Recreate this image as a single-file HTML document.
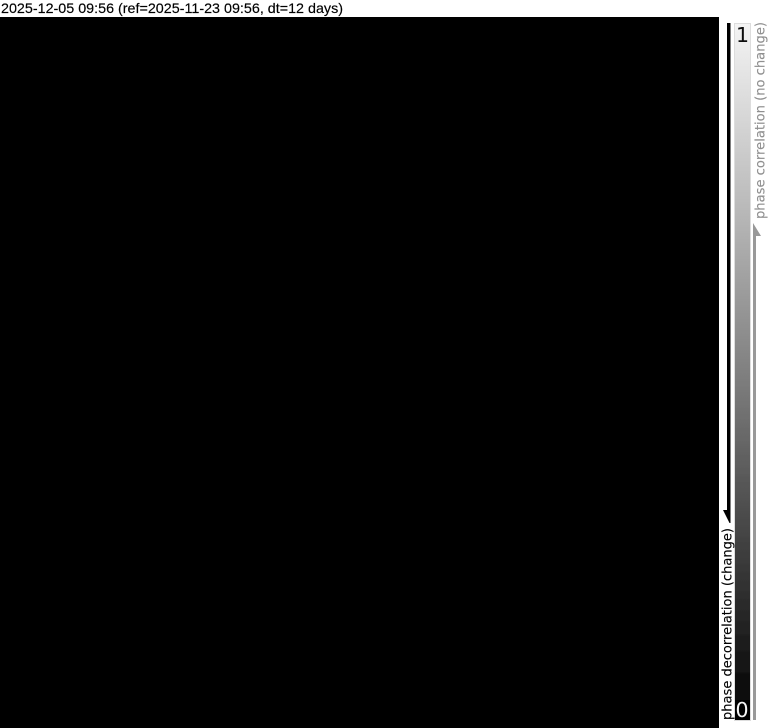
<!DOCTYPE html>
<html lang="en">
<head>
<meta charset="utf-8">
<title>Phase correlation</title>
<style>
html,body{margin:0;padding:0;background:#fff;}
body{width:768px;height:728px;overflow:hidden;position:relative;}
svg{position:absolute;left:0;top:0;display:block;}
</style>
</head>
<body>
<svg width="768" height="728" viewBox="0 0 768 728" xmlns="http://www.w3.org/2000/svg">
<defs>
<linearGradient id="g" x1="0" y1="0" x2="0" y2="1">
<stop offset="0" stop-color="#f4f4f4"/>
<stop offset="0.25" stop-color="#bdbdbd"/>
<stop offset="0.5" stop-color="#808080"/>
<stop offset="0.75" stop-color="#404040"/>
<stop offset="1" stop-color="#000"/>
</linearGradient>
<filter id="b" x="-10%" y="-10%" width="120%" height="120%"><feGaussianBlur stdDeviation="0.35"/></filter>
<filter id="t" x="-2%" y="-10%" width="104%" height="120%"><feGaussianBlur stdDeviation="0.25"/></filter>
</defs>
<rect width="768" height="728" fill="#fff"/>
<rect x="0" y="17" width="719" height="711" fill="#000"/>
<text x="1" y="13" font-family="'Liberation Sans',sans-serif" font-size="14" fill="#000" textLength="342" lengthAdjust="spacingAndGlyphs" stroke="#000" stroke-width="0.15" filter="url(#t)">2025-12-05 09:56 (ref=2025-11-23 09:56, dt=12 days)</text>
<g filter="url(#b)">
<rect x="734.5" y="23.5" width="16" height="697" fill="url(#g)" stroke="#ddd" stroke-width="1"/>
<rect x="735" y="700" width="15" height="20" fill="#050505"/>
<text x="742.5" y="42" text-anchor="middle" font-family="'DejaVu Sans',sans-serif" font-size="20.5" fill="#111">1</text>
<text x="742" y="717" text-anchor="middle" font-family="'DejaVu Sans',sans-serif" font-size="20.5" fill="#f5f5f5">0</text>
<path d="M727 23H730.5V523H729.5L723 510H727Z" fill="#000"/>
<path d="M753 720H756V236H761L753 223Z" fill="#999"/>
<text transform="translate(731.5 720) rotate(-90)" font-family="'DejaVu Sans',sans-serif" font-size="13.5" fill="#000" stroke="#000" stroke-width="0.1" textLength="192" lengthAdjust="spacingAndGlyphs">phase decorrelation (change)</text>
<text transform="translate(764.5 219) rotate(-90)" font-family="'DejaVu Sans',sans-serif" font-size="13.5" fill="#8f8f8f" stroke="#8f8f8f" stroke-width="0.1" textLength="197" lengthAdjust="spacingAndGlyphs">phase correlation (no change)</text>
</g>
</svg>
</body>
</html>
